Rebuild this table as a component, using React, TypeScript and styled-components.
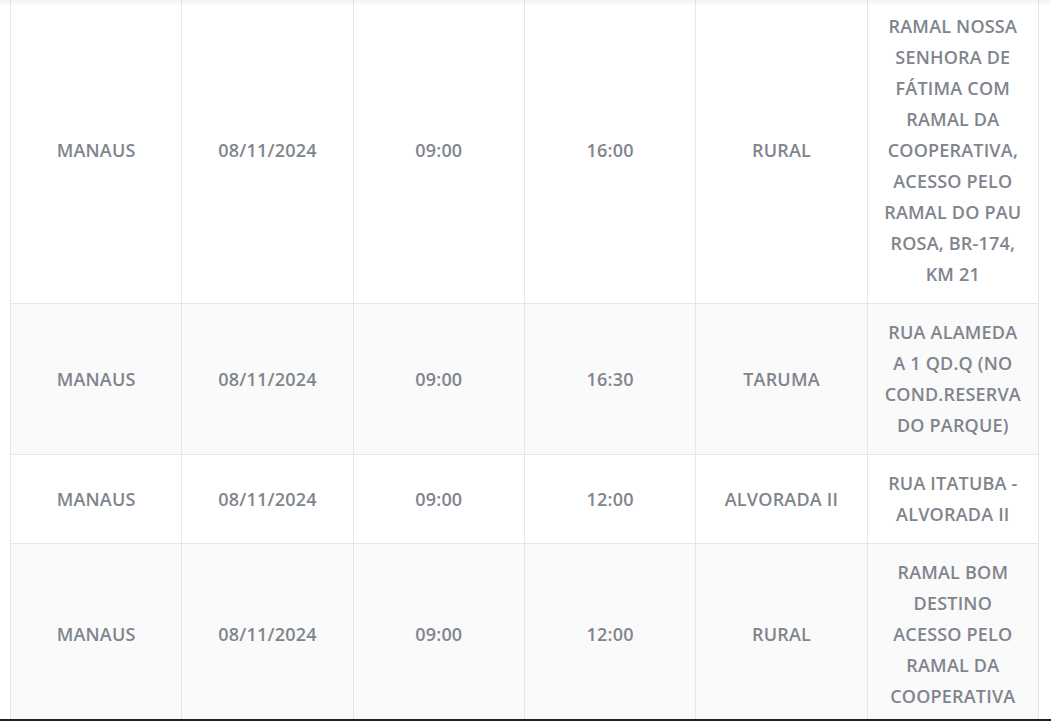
import React from 'react';
import styled, { createGlobalStyle } from 'styled-components';

const GlobalStyle = createGlobalStyle`
  html, body {
    margin: 0;
    padding: 0;
    background: #ffffff;
    overflow: hidden;
    height: 721px;
  }
  * {
    box-sizing: border-box;
  }
`;

const Page = styled.div`
  position: relative;
  height: 721px;
  overflow: hidden;
  padding: 0 12px 0 10px;
  font-family: 'Open Sans', 'Liberation Sans', sans-serif;
`;

const TopShade = styled.div`
  position: absolute;
  top: 0;
  left: 0;
  right: 0;
  height: 6px;
  background: linear-gradient(to bottom, rgba(0, 0, 0, 0.05), rgba(0, 0, 0, 0));
  pointer-events: none;
`;

const BottomEdge = styled.div`
  position: absolute;
  bottom: 0;
  left: 0;
  right: 0;
  height: 2px;
  background: #1f1f1f;
`;

const Table = styled.table`
  width: 100%;
  margin-top: -3px;
  border-collapse: collapse;
  table-layout: fixed;
`;

const Row = styled.tr<{ striped?: boolean }>`
  background: ${({ striped }) => (striped ? '#fafafa' : '#ffffff')};
`;

const Cell = styled.td`
  border: 1px solid #e6e6e6;
  padding: 13px 6px;
  text-align: center;
  vertical-align: middle;
  color: #80858d;
  font-size: 18px;
  font-weight: 600;
  letter-spacing: 0.2px;
  line-height: 31px;
  text-transform: uppercase;
`;

type Entry = {
  city: string;
  date: string;
  start: string;
  end: string;
  area: string;
  address: string[];
};

const entries: Entry[] = [
  {
    city: 'MANAUS',
    date: '08/11/2024',
    start: '09:00',
    end: '16:00',
    area: 'RURAL',
    address: [
      'RAMAL NOSSA',
      'SENHORA DE',
      'FÁTIMA COM',
      'RAMAL DA',
      'COOPERATIVA,',
      'ACESSO PELO',
      'RAMAL DO PAU',
      'ROSA, BR-174,',
      'KM 21',
    ],
  },
  {
    city: 'MANAUS',
    date: '08/11/2024',
    start: '09:00',
    end: '16:30',
    area: 'TARUMA',
    address: ['RUA ALAMEDA', 'A 1 QD.Q (NO', 'COND.RESERVA', 'DO PARQUE)'],
  },
  {
    city: 'MANAUS',
    date: '08/11/2024',
    start: '09:00',
    end: '12:00',
    area: 'ALVORADA II',
    address: ['RUA ITATUBA -', 'ALVORADA II'],
  },
  {
    city: 'MANAUS',
    date: '08/11/2024',
    start: '09:00',
    end: '12:00',
    area: 'RURAL',
    address: ['RAMAL BOM', 'DESTINO', 'ACESSO PELO', 'RAMAL DA', 'COOPERATIVA'],
  },
];

export default function App() {
  return (
    <>
      <GlobalStyle />
      <Page>
        <Table>
          <tbody>
            {entries.map((e, i) => (
              <Row key={i} striped={i % 2 === 1}>
                <Cell>{e.city}</Cell>
                <Cell>{e.date}</Cell>
                <Cell>{e.start}</Cell>
                <Cell>{e.end}</Cell>
                <Cell>{e.area}</Cell>
                <Cell>
                  {e.address.map((line, j) => (
                    <React.Fragment key={j}>
                      {j > 0 && <br />}
                      {line}
                    </React.Fragment>
                  ))}
                </Cell>
              </Row>
            ))}
          </tbody>
        </Table>
        <TopShade />
        <BottomEdge />
      </Page>
    </>
  );
}
